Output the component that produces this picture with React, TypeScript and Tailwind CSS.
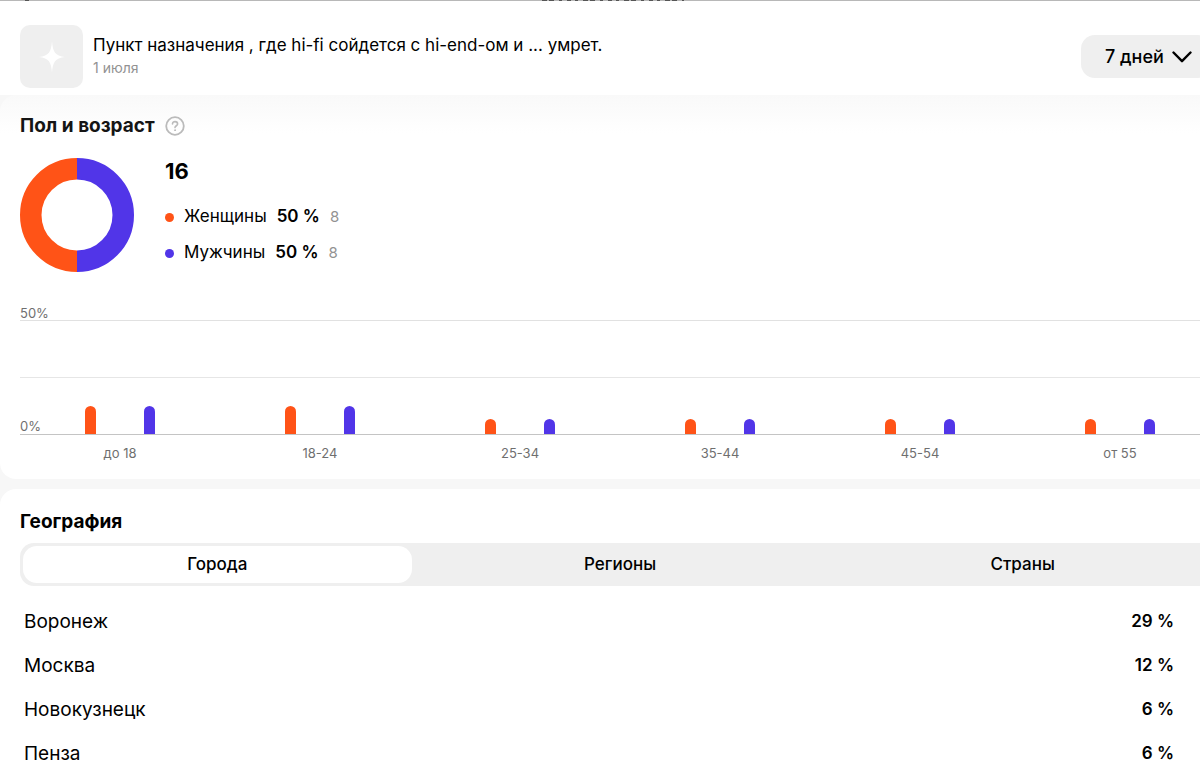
import { useState } from "react";

const ORANGE = "#ff5317";
const VIOLET = "#5135e8";

interface AgeGroup {
  label: string;
  women: number;
  men: number;
}

const ageGroups: AgeGroup[] = [
  { label: "до 18", women: 12.5, men: 12.5 },
  { label: "18-24", women: 12.5, men: 12.5 },
  { label: "25-34", women: 6.5, men: 6.5 },
  { label: "35-44", women: 6.5, men: 6.5 },
  { label: "45-54", women: 6.5, men: 6.5 },
  { label: "от 55", women: 6.5, men: 6.5 },
];

const genders = [
  { name: "Женщины", share: "50 %", count: 8, color: ORANGE },
  { name: "Мужчины", share: "50 %", count: 8, color: VIOLET },
];

const tabs = ["Города", "Регионы", "Страны"];

const cities = [
  { name: "Воронеж", share: "29 %" },
  { name: "Москва", share: "12 %" },
  { name: "Новокузнецк", share: "6 %" },
  { name: "Пенза", share: "6 %" },
];

// Lower edge of the navigation bar that is scrolled out of view
function NavEdge() {
  return (
    <div className="flex h-px items-start bg-[#b8b8b8] pl-[25px]">
      <div className="h-px w-1 bg-[#555]" />
      <div className="flex flex-1 justify-center pr-1">
        <svg viewBox="0 0 142 1" className="h-px w-[142px]" stroke="#555" aria-hidden="true">
          <path d="M0 0.5H142" strokeDasharray="5 2 5 5 3 5 4 4 3 5" />
        </svg>
      </div>
    </div>
  );
}

function PostHeader() {
  return (
    <header className="flex h-[94px] items-start bg-white pl-5 pt-6">
      <div className="flex size-[63px] shrink-0 items-center justify-center rounded-[10px] bg-[#efefef]">
        <svg viewBox="0 0 28 32" className="h-8 w-7" fill="#fff" aria-hidden="true">
          <path d="M14 0C14.8 11 17 14.8 27 16C17 17.2 14.8 21 14 32C13.2 21 11 17.2 1 16C11 14.8 13.2 11 14 0Z" />
        </svg>
      </div>
      <div className="ml-[10px] min-w-0 flex-1 pt-[9px]">
        <h1 className="truncate text-[17px] leading-[22px]">
          Пункт назначения , где hi-fi сойдется с hi-end-ом и ... умрет.
        </h1>
        <p className="text-[14px] leading-6 text-[#929292]">1 июля</p>
      </div>
      <div className="relative -mr-3 mt-[10px] shrink-0">
        <select
          aria-label="Период"
          className="h-[43px] w-[131px] appearance-none rounded-[14px] bg-[#efefef] pl-6 text-[18px] font-medium"
        >
          <option>7 дней</option>
          <option>30 дней</option>
        </select>
        <svg
          viewBox="0 0 20 12"
          className="pointer-events-none absolute right-5 top-4 h-3 w-5"
          fill="none"
          stroke="#000"
          strokeWidth="2.4"
          strokeLinecap="round"
          strokeLinejoin="round"
          aria-hidden="true"
        >
          <path d="M1.5 1.5L10 10.2L18.5 1.5" />
        </svg>
      </div>
    </header>
  );
}

function Donut() {
  return (
    <svg viewBox="0 0 114 114" className="size-[114px] shrink-0" fill="none" strokeWidth="21.5" aria-hidden="true">
      <path d="M57 10.75A46.25 46.25 0 0 0 57 103.25" stroke={ORANGE} />
      <path d="M57 10.75A46.25 46.25 0 0 1 57 103.25" stroke={VIOLET} />
    </svg>
  );
}

function Bar({ value, color }: { value: number; color: string }) {
  return (
    <div
      className="w-[11px] rounded-t-full"
      style={{ height: `${(value / 50) * 100}%`, backgroundColor: color }}
    />
  );
}

function AgeChart() {
  return (
    <div className="mt-[34px] text-[13px] text-[#6f6f6f]">
      <div className="leading-[14px]">50%</div>
      <div className="relative flex h-[115px] flex-col justify-between">
        <div className="h-px bg-[#e1e1e1]" />
        <div className="h-px bg-[#e6e6e6]" />
        <div className="h-px bg-[#c4c4c4]" />
        <span className="absolute bottom-px left-0 leading-4">0%</span>
        <div className="absolute inset-x-0 bottom-px top-0 grid grid-cols-6">
          {ageGroups.map((group) => (
            <div key={group.label} className="flex items-end justify-center gap-12">
              <Bar value={group.women} color={ORANGE} />
              <Bar value={group.men} color={VIOLET} />
            </div>
          ))}
        </div>
      </div>
      <div className="mt-[10px] grid grid-cols-6 text-center leading-4">
        {ageGroups.map((group) => (
          <span key={group.label}>{group.label}</span>
        ))}
      </div>
    </div>
  );
}

function Audience() {
  return (
    <section className="-mr-5 rounded-2xl bg-linear-to-b from-[#f9f9f9] to-white to-10% pb-[18px] pl-5 pt-[17px]">
      <div className="flex items-center gap-[10px]">
        <h2 className="text-[19px] font-bold leading-7 text-[#151515]">Пол и возраст</h2>
        <button type="button" aria-label="Справка" className="size-5">
          <svg viewBox="0 0 20 20" fill="none" stroke="#bbb" strokeLinecap="round" aria-hidden="true">
            <circle cx="10" cy="10" r="8.8" strokeWidth="1.8" />
            <path d="M7.5 8C7.5 4.7 12.6 4.9 12.6 7.9C12.6 9.7 10 9.8 10 11.6" strokeWidth="1.6" />
            <circle cx="10" cy="14.2" r="0.5" strokeWidth="1" fill="#bbb" />
          </svg>
        </button>
      </div>
      <div className="mt-[18px] flex gap-[31px]">
        <Donut />
        <div>
          <p className="text-[22px] font-bold leading-[26px]">16</p>
          <ul className="mt-[15px]">
            {genders.map((g) => (
              <li key={g.name} className="flex h-9 items-center text-[17px]">
                <span className="mr-[10px] size-[9px] rounded-full" style={{ backgroundColor: g.color }} />
                <span>{g.name}</span>
                <b className="ml-[10px] font-semibold">{g.share}</b>
                <span className="ml-[10px] text-[15px] text-[#929292]">{g.count}</span>
              </li>
            ))}
          </ul>
        </div>
      </div>
      <AgeChart />
    </section>
  );
}

function Geography() {
  const [active, setActive] = useState(tabs[0]);

  return (
    <section className="-mr-5 mt-[10px] rounded-t-2xl bg-white pl-5 pt-[19px]">
      <h2 className="text-[19px] font-bold leading-7">География</h2>
      <div role="tablist" className="mt-[7px] grid h-[43px] grid-cols-3 gap-[14px] rounded-[14px] bg-[#efefef] p-[3px]">
        {tabs.map((tab) => (
          <button
            key={tab}
            type="button"
            role="tab"
            aria-selected={tab === active}
            onClick={() => setActive(tab)}
            className={
              tab === active
                ? "rounded-[14px] bg-white text-[17px] font-medium"
                : "rounded-[14px] text-[17px] font-medium"
            }
          >
            {tab}
          </button>
        ))}
      </div>
      <table className="mt-[14px] w-full">
        <tbody>
          {cities.map((city) => (
            <tr key={city.name} className="h-11">
              <th scope="row" className="pl-1 text-left text-[19px] font-normal">
                {city.name}
              </th>
              <td className="pr-[46px] text-right text-[17px] font-semibold">{city.share}</td>
            </tr>
          ))}
        </tbody>
      </table>
    </section>
  );
}

export default function App() {
  return (
    <main className="overflow-hidden bg-[#f7f7f7] font-['Inter','Liberation_Sans',sans-serif] text-black">
      <NavEdge />
      <PostHeader />
      <Audience />
      <Geography />
    </main>
  );
}
